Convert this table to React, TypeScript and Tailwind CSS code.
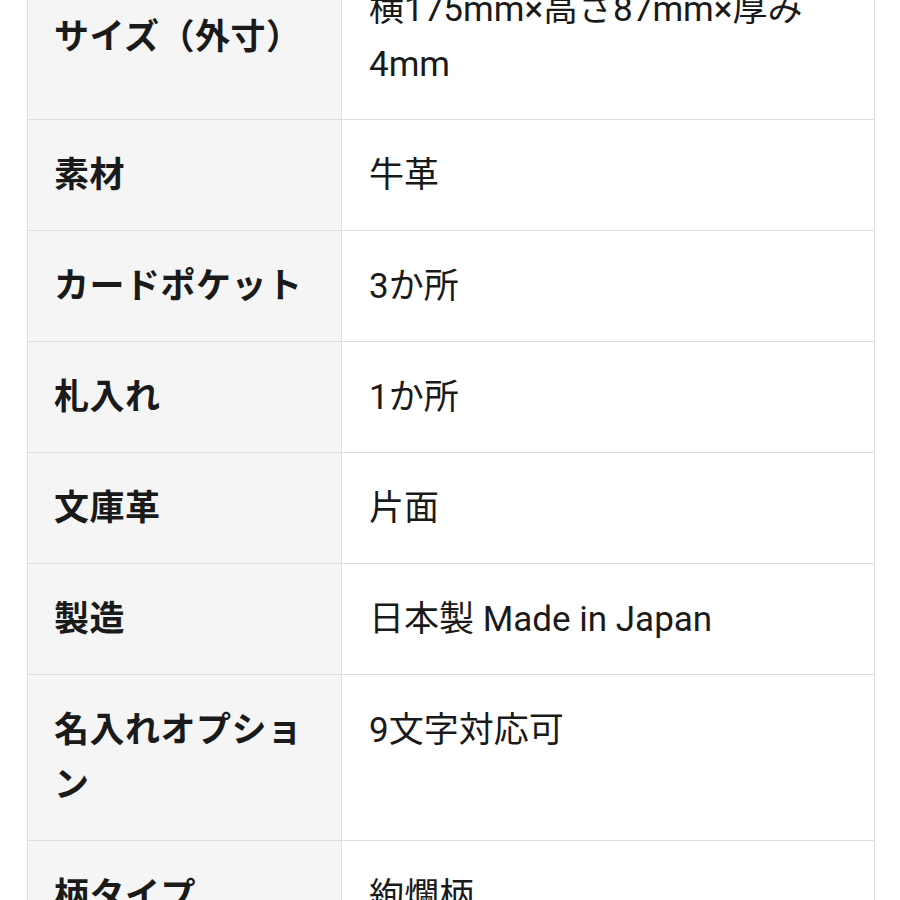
const rows: { label: string; value: string }[] = [
    { label: "サイズ（外寸）", value: "横175mm×高さ87mm×厚み4mm" },
    { label: "素材", value: "牛革" },
    { label: "カードポケット", value: "3か所" },
    { label: "札入れ", value: "1か所" },
    { label: "文庫革", value: "片面" },
    { label: "製造", value: "日本製 Made in Japan" },
    { label: "名入れオプション", value: "9文字対応可" },
    { label: "柄タイプ", value: "絢爛柄" },
];

export default function App() {
    return (
        <div
            className="h-[900px] w-[900px] overflow-hidden bg-white"
            style={{ fontFamily: 'Roboto, "Noto Sans CJK JP", sans-serif' }}
        >
            <div className="mt-[-47px] pl-[27px] pr-[25px]">
                <table className="w-full table-fixed border-collapse border border-[#dedede] text-[35px] leading-[55px] text-[#1a1a1a]">
                    <colgroup>
                        <col className="w-[314px]" />
                        <col />
                    </colgroup>
                    <tbody>
                        {rows.map((row) => (
                            <tr key={row.label} className="border-b border-[#dedede]">
                                <th className="border-r border-[#dedede] bg-[#f5f5f5] px-[26px] pt-[28px] pb-[27px] text-left align-middle font-bold tracking-[0.5px]">
                                    {row.label}
                                </th>
                                <td className="px-[27px] pt-[28px] pb-[27px] align-top font-normal">
                                    {row.value}
                                </td>
                            </tr>
                        ))}
                    </tbody>
                </table>
            </div>
        </div>
    );
}
